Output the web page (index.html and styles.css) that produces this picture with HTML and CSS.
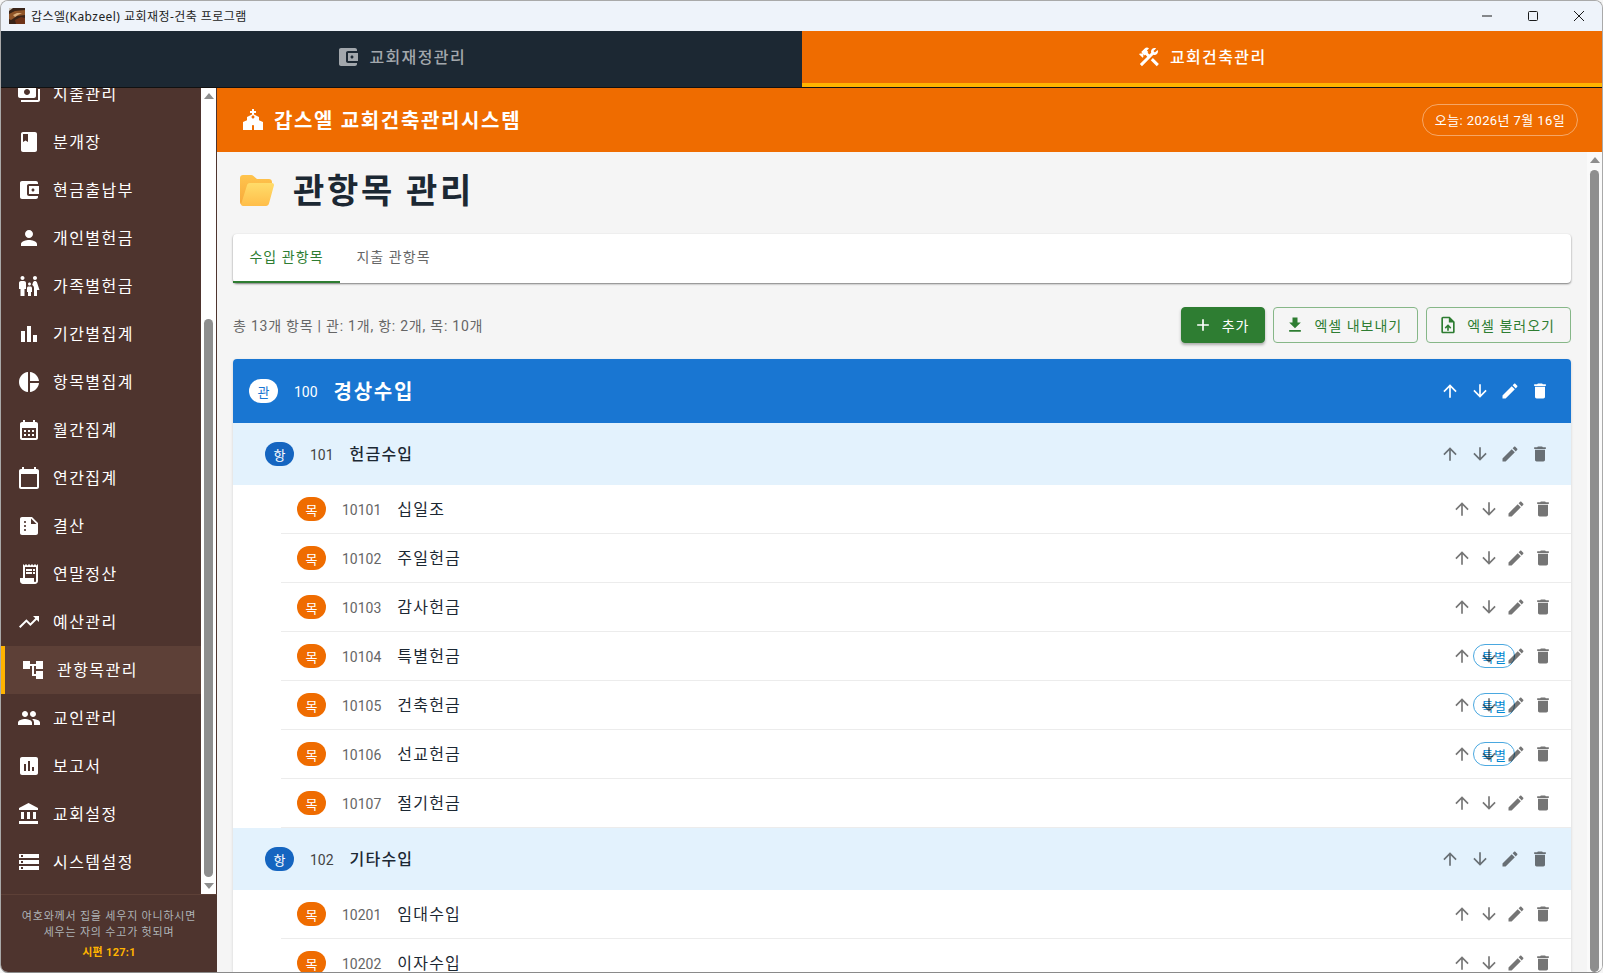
FILE: index.html
```html
<!DOCTYPE html>
<html lang="ko">
<head>
    <meta charset="UTF-8">
    <title>갑스엘(Kabzeel) 교회재정-건축 프로그램</title>
    <link rel="stylesheet" href="styles.css">
</head>
<body>
<svg class="sprites" width="0" height="0">
    <symbol id="i-wallet" viewBox="0 0 24 24"><path d="M21 18v1c0 1.1-.9 2-2 2H5c-1.11 0-2-.9-2-2V5c0-1.1.89-2 2-2h14c1.1 0 2 .9 2 2v1h-9c-1.11 0-2 .9-2 2v8c0 1.1.89 2 2 2h9zm-9-2h10V8H12v8zm4-2.5c-.83 0-1.5-.67-1.5-1.5s.67-1.5 1.5-1.5 1.5.67 1.5 1.5-.67 1.5-1.5 1.5z"/></symbol>
    <symbol id="i-payments" viewBox="0 0 24 24"><path d="M19 14V6c0-1.1-.9-2-2-2H3c-1.1 0-2 .9-2 2v8c0 1.1.9 2 2 2h14c1.1 0 2-.9 2-2zm-9-1c-1.66 0-3-1.34-3-3s1.34-3 3-3 3 1.34 3 3-1.34 3-3 3zm13-6v11c0 1.1-.9 2-2 2H4v-2h17V7h2z"/></symbol>
    <symbol id="i-tools" viewBox="0 0 24 24"><path d="m13.783 15.172 2.121-2.121 5.996 5.996-2.121 2.121zM17.5 10c1.93 0 3.5-1.57 3.5-3.5 0-.58-.16-1.12-.41-1.6l-2.7 2.7-1.49-1.49 2.7-2.7c-.48-.25-1.02-.41-1.6-.41C15.57 3 14 4.57 14 6.5c0 .41.08.8.21 1.16l-1.85 1.85-1.78-1.78.71-.71-1.41-1.41L12 3.49c-1.17-1.17-3.07-1.17-4.24 0L4.22 7.03l1.41 1.41H2.81l-.71.71 3.54 3.54.71-.71V9.15l1.41 1.41.71-.71 1.78 1.78-7.41 7.41 2.12 2.12L16.34 9.79c.36.13.75.21 1.16.21z"/></symbol>
    <symbol id="i-church" viewBox="0 0 24 24"><path d="M18 12.22V9l-5-2.5V5h2V3h-2V1h-2v2H9v2h2v1.5L6 9v3.22L2 14v8h9v-4c0-.55.45-1 1-1s1 .45 1 1v4h9v-8l-4-1.78zm-6-1.72c-.83 0-1.5-.67-1.5-1.5s.67-1.5 1.5-1.5 1.5.67 1.5 1.5-.67 1.5-1.5 1.5z"/></symbol>
    <symbol id="i-book" viewBox="0 0 24 24"><path d="M18 2H6c-1.1 0-2 .9-2 2v16c0 1.1.9 2 2 2h12c1.1 0 2-.9 2-2V4c0-1.1-.9-2-2-2zM6 4h5v8l-2.5-1.5L6 12V4z"/></symbol>
    <symbol id="i-person" viewBox="0 0 24 24"><path d="M12 12c2.21 0 4-1.79 4-4s-1.79-4-4-4-4 1.79-4 4 1.79 4 4 4zm0 2c-2.67 0-8 1.34-8 4v2h16v-2c0-2.66-5.33-4-8-4z"/></symbol>
    <symbol id="i-family" viewBox="0 0 24 24"><path d="M16 4c0-1.11.89-2 2-2s2 .89 2 2-.89 2-2 2-2-.89-2-2zm4 18v-6h2.5l-2.54-7.63C19.68 7.55 18.92 7 18.06 7h-.12c-.86 0-1.63.55-1.9 1.37l-.86 2.58c1.08.6 1.82 1.73 1.82 3.05v8h3zm-7.5-10.5c.83 0 1.5-.67 1.5-1.5s-.67-1.5-1.5-1.5S11 9.17 11 10s.67 1.5 1.5 1.5zM5.5 6c1.11 0 2-.89 2-2s-.89-2-2-2-2 .89-2 2 .89 2 2 2zm2 16v-7H9V9c0-1.1-.9-2-2-2H4c-1.1 0-2 .9-2 2v6h1.5v7h4zm6.5 0v-4h1v-4c0-.82-.68-1.5-1.5-1.5h-2c-.82 0-1.5.68-1.5 1.5v4h1v4h3z"/></symbol>
    <symbol id="i-bars" viewBox="0 0 24 24"><path d="M4 9h4v11H4zm12 4h4v7h-4zm-6-9h4v16h-4z"/></symbol>
    <symbol id="i-pie" viewBox="0 0 24 24"><path d="M11 2v20c-5.07-.5-9-4.79-9-10s3.93-9.5 9-10zm2.03 0v8.99H22c-.47-4.74-4.24-8.52-8.97-8.99zm0 11.01V22c4.74-.47 8.5-4.25 8.97-8.99h-8.97z"/></symbol>
    <symbol id="i-month" viewBox="0 0 24 24"><path d="M19 4h-1V2h-2v2H8V2H6v2H5c-1.11 0-1.99.9-1.99 2L3 20c0 1.1.89 2 2 2h14c1.1 0 2-.9 2-2V6c0-1.1-.9-2-2-2zm0 16H5V10h14v10zM9 14H7v-2h2v2zm4 0h-2v-2h2v2zm4 0h-2v-2h2v2zm-8 4H7v-2h2v2zm4 0h-2v-2h2v2zm4 0h-2v-2h2v2z"/></symbol>
    <symbol id="i-year" viewBox="0 0 24 24"><path d="M20 3h-1V1h-2v2H7V1H5v2H4c-1.1 0-2 .9-2 2v16c0 1.1.9 2 2 2h16c1.1 0 2-.9 2-2V5c0-1.1-.9-2-2-2zm0 18H4V8h16v13z"/></symbol>
    <symbol id="i-summary" viewBox="0 0 24 24"><path d="M15 3H5c-1.1 0-1.99.9-1.99 2L3 19c0 1.1.89 2 1.99 2H19c1.1 0 2-.9 2-2V9l-6-6zM8 17c-.55 0-1-.45-1-1s.45-1 1-1 1 .45 1 1-.45 1-1 1zm0-4c-.55 0-1-.45-1-1s.45-1 1-1 1 .45 1 1-.45 1-1 1zm0-4c-.55 0-1-.45-1-1s.45-1 1-1 1 .45 1 1-.45 1-1 1zm6 1V4.5l5.5 5.5H14z"/></symbol>
    <symbol id="i-receipt" viewBox="0 0 24 24"><path d="M19.5 3.5 18 2l-1.5 1.5L15 2l-1.5 1.5L12 2l-1.5 1.5L9 2 7.5 3.5 6 2v14H3v3c0 1.66 1.34 3 3 3h12c1.66 0 3-1.34 3-3V2l-1.5 1.5zM19 19c0 .55-.45 1-1 1s-1-.45-1-1v-3H8V5h11v14z"/><path d="M9 7h6v2H9zm7 0h2v2h-2zm-7 3h6v2H9zm7 0h2v2h-2z"/></symbol>
    <symbol id="i-trend" viewBox="0 0 24 24"><path d="M16 6l2.29 2.29-4.88 4.88-4-4L2 16.59 3.41 18l6-6 4 4 6.3-6.29L22 12V6z"/></symbol>
    <symbol id="i-tree" viewBox="0 0 24 24"><path d="M22 11V3h-7v3H9V3H2v8h7V8h2v10h4v3h7v-8h-7v3h-2V8h2v3z"/></symbol>
    <symbol id="i-people" viewBox="0 0 24 24"><path d="M16 11c1.66 0 2.99-1.34 2.99-3S17.66 5 16 5c-1.66 0-3 1.34-3 3s1.34 3 3 3zm-8 0c1.66 0 2.99-1.34 2.99-3S9.66 5 8 5C6.34 5 5 6.34 5 8s1.34 3 3 3zm0 2c-2.33 0-7 1.17-7 3.5V19h14v-2.5c0-2.33-4.67-3.5-7-3.5zm8 0c-.29 0-.62.02-.97.05 1.16.84 1.97 1.97 1.97 3.45V19h6v-2.5c0-2.33-4.67-3.5-7-3.5z"/></symbol>
    <symbol id="i-report" viewBox="0 0 24 24"><path d="M19 3H5c-1.1 0-2 .9-2 2v14c0 1.1.9 2 2 2h14c1.1 0 2-.9 2-2V5c0-1.1-.9-2-2-2zM9 17H7v-7h2v7zm4 0h-2V7h2v10zm4 0h-2v-4h2v4z"/></symbol>
    <symbol id="i-bank" viewBox="0 0 24 24"><path d="M4 10v7h3v-7H4zm6 0v7h3v-7h-3zM2 22h19v-3H2v3zm14-12v7h3v-7h-3zm-4.5-9L2 6v2h19V6l-9.5-5z"/></symbol>
    <symbol id="i-storage" viewBox="0 0 24 24"><path d="M2 20h20v-4H2v4zm2-3h2v2H4v-2zM2 4v4h20V4H2zm4 3H4V5h2v2zm-4 7h20v-4H2v4zm2-3h2v2H4v-2z"/></symbol>
    <symbol id="i-up" viewBox="0 0 24 24"><path d="M4 12l1.41 1.41L11 7.83V20h2V7.83l5.58 5.59L20 12l-8-8-8 8z"/></symbol>
    <symbol id="i-down" viewBox="0 0 24 24"><path d="M20 12l-1.41-1.41L13 16.17V4h-2v12.17l-5.58-5.59L4 12l8 8 8-8z"/></symbol>
    <symbol id="i-edit" viewBox="0 0 24 24"><path d="M3 17.25V21h3.75L17.81 9.94l-3.75-3.75L3 17.25zM20.71 7.04c.39-.39.39-1.02 0-1.41l-2.34-2.34c-.39-.39-1.02-.39-1.41 0l-1.83 1.83 3.75 3.75 1.83-1.83z"/></symbol>
    <symbol id="i-trash" viewBox="0 0 24 24"><path d="M6 19c0 1.1.9 2 2 2h8c1.1 0 2-.9 2-2V7H6v12zM19 4h-3.5l-1-1h-5l-1 1H5v2h14V4z"/></symbol>
    <symbol id="i-add" viewBox="0 0 24 24"><path d="M19 13h-6v6h-2v-6H5v-2h6V5h2v6h6v2z"/></symbol>
    <symbol id="i-export" viewBox="0 0 24 24"><path d="M5 20h14v-2H5v2zM19 9h-4V3H9v6H5l7 7 7-7z"/></symbol>
    <symbol id="i-import" viewBox="0 0 24 24"><path d="M14 2H6c-1.1 0-1.99.9-1.99 2L4 20c0 1.1.89 2 1.99 2H18c1.1 0 2-.9 2-2V8l-6-6zm4 18H6V4h7v5h5v11zM8 15.01l1.41 1.41L11 14.84V19h2v-4.16l1.59 1.59L16 15.01 12.01 11 8 15.01z"/></symbol>
</svg>

<div class="window">
    <div class="titlebar">
        <svg class="app-icon" viewBox="0 0 16 16">
            <rect width="16" height="16" fill="#3a2418"/>
            <path d="M0 6 6 3l10-1v5L8 8 2 12 0 11z" fill="#8f5428"/>
            <path d="M4 7l4-2 5 0-4 2-3 2z" fill="#d9ae7c"/>
            <path d="M6 12l6-3 4 1v6H7z" fill="#6e3318"/>
            <path d="M0 0h4L0 3z" fill="#cfc6b8"/>
        </svg>
        <span class="app-title">갑스엘(Kabzeel) 교회재정-건축 프로그램</span>
        <div class="win-controls">
            <svg viewBox="0 0 10 10"><path d="M0 5h10" stroke="#1a1a1a" fill="none"/></svg>
            <svg viewBox="0 0 10 10"><rect x=".5" y=".5" width="9" height="9" rx="1" stroke="#1a1a1a" fill="none"/></svg>
            <svg viewBox="0 0 10 10"><path d="M0 0l10 10M10 0 0 10" stroke="#1a1a1a" fill="none"/></svg>
        </div>
    </div>

    <div class="module-tabs">
        <div class="module-tab">
            <svg class="icon"><use href="#i-wallet"/></svg><span>교회재정관리</span>
        </div>
        <div class="module-tab active">
            <svg class="icon"><use href="#i-tools"/></svg><span>교회건축관리</span>
        </div>
    </div>

    <div class="app-body">
        <aside class="sidebar">
            <div class="sidebar-scroll">
                <nav class="nav-list">
                    <a class="nav-item"><svg class="icon"><use href="#i-payments"/></svg><span>지출관리</span></a>
                    <a class="nav-item"><svg class="icon"><use href="#i-book"/></svg><span>분개장</span></a>
                    <a class="nav-item"><svg class="icon"><use href="#i-wallet"/></svg><span>현금출납부</span></a>
                    <a class="nav-item"><svg class="icon"><use href="#i-person"/></svg><span>개인별헌금</span></a>
                    <a class="nav-item"><svg class="icon"><use href="#i-family"/></svg><span>가족별헌금</span></a>
                    <a class="nav-item"><svg class="icon"><use href="#i-bars"/></svg><span>기간별집계</span></a>
                    <a class="nav-item"><svg class="icon"><use href="#i-pie"/></svg><span>항목별집계</span></a>
                    <a class="nav-item"><svg class="icon"><use href="#i-month"/></svg><span>월간집계</span></a>
                    <a class="nav-item"><svg class="icon"><use href="#i-year"/></svg><span>연간집계</span></a>
                    <a class="nav-item"><svg class="icon"><use href="#i-summary"/></svg><span>결산</span></a>
                    <a class="nav-item"><svg class="icon"><use href="#i-receipt"/></svg><span>연말정산</span></a>
                    <a class="nav-item"><svg class="icon"><use href="#i-trend"/></svg><span>예산관리</span></a>
                    <a class="nav-item active"><svg class="icon"><use href="#i-tree"/></svg><span>관항목관리</span></a>
                    <a class="nav-item"><svg class="icon"><use href="#i-people"/></svg><span>교인관리</span></a>
                    <a class="nav-item"><svg class="icon"><use href="#i-report"/></svg><span>보고서</span></a>
                    <a class="nav-item"><svg class="icon"><use href="#i-bank"/></svg><span>교회설정</span></a>
                    <a class="nav-item"><svg class="icon"><use href="#i-storage"/></svg><span>시스템설정</span></a>
                </nav>
                <div class="scrollbar scrollbar-nav">
                    <span class="arrow-up"></span>
                    <span class="thumb"></span>
                    <span class="arrow-down"></span>
                </div>
            </div>
            <div class="sidebar-foot">
                <p>여호와께서 집을 세우지 아니하시면<br>세우는 자의 수고가 헛되며</p>
                <p class="verse">시편 127:1</p>
            </div>
        </aside>

        <main class="main">
            <header class="main-head">
                <svg class="icon"><use href="#i-church"/></svg>
                <h2>갑스엘 교회건축관리시스템</h2>
                <span class="today">오늘: 2026년 7월 16일</span>
            </header>

            <div class="main-scroll">
                <div class="page">
                    <h1 class="page-title">
                        <svg class="folder" viewBox="0 0 34 31">
                            <defs>
                                <linearGradient id="folderBack" x1="0" y1="0" x2="0" y2="1">
                                    <stop offset="0" stop-color="#ffc44d"/>
                                    <stop offset="1" stop-color="#f7a93a"/>
                                </linearGradient>
                                <linearGradient id="folderFront" x1="0" y1="0" x2="0" y2="1">
                                    <stop offset="0" stop-color="#ffdc6a"/>
                                    <stop offset="1" stop-color="#ffbe4a"/>
                                </linearGradient>
                            </defs>
                            <path d="M3 0h8c1 0 1.8.4 2.5 1.1L17 4h12c1.7 0 3 1.3 3 3v4H9L3 30c-1.7 0-3-1.3-3-3V3c0-1.7 1.3-3 3-3z" fill="url(#folderBack)"/>
                            <path d="M10 8h22c1.4 0 2.3 1.2 1.9 2.6L29 28.5c-.4 1.5-1.5 2.5-3 2.5H3c-1.4 0-2.1-1-1.7-2.4L7 10.3C7.4 8.9 8.5 8 10 8z" fill="url(#folderFront)"/>
                        </svg>
                        <span class="page-name">관항목 관리</span>
                    </h1>

                    <div class="tabs">
                        <span class="tab selected">수입 관항목</span>
                        <span class="tab">지출 관항목</span>
                    </div>

                    <div class="toolbar">
                        <span class="summary">총 13개 항목 | 관: 1개, 항: 2개, 목: 10개</span>
                        <button class="btn btn-solid"><svg class="icon"><use href="#i-add"/></svg>추가</button>
                        <button class="btn"><svg class="icon"><use href="#i-export"/></svg>엑셀 내보내기</button>
                        <button class="btn"><svg class="icon"><use href="#i-import"/></svg>엑셀 불러오기</button>
                    </div>

                    <div class="tree">
                        <div class="row row-gwan">
                            <span class="badge">관</span><span class="code">100</span><span class="name">경상수입</span>
                            <div class="actions">
                                <svg class="icon"><use href="#i-up"/></svg><svg class="icon"><use href="#i-down"/></svg><svg class="icon"><use href="#i-edit"/></svg><svg class="icon"><use href="#i-trash"/></svg>
                            </div>
                        </div>

                        <div class="row row-hang">
                            <span class="badge">항</span><span class="code">101</span><span class="name">헌금수입</span>
                            <div class="actions">
                                <svg class="icon"><use href="#i-up"/></svg><svg class="icon"><use href="#i-down"/></svg><svg class="icon"><use href="#i-edit"/></svg><svg class="icon"><use href="#i-trash"/></svg>
                            </div>
                        </div>
                        <div class="row row-mok">
                            <span class="badge">목</span><span class="code">10101</span><span class="name">십일조</span>
                            <div class="actions">
                                <svg class="icon"><use href="#i-up"/></svg><svg class="icon"><use href="#i-down"/></svg><svg class="icon"><use href="#i-edit"/></svg><svg class="icon"><use href="#i-trash"/></svg>
                            </div>
                        </div>
                        <div class="row row-mok">
                            <span class="badge">목</span><span class="code">10102</span><span class="name">주일헌금</span>
                            <div class="actions">
                                <svg class="icon"><use href="#i-up"/></svg><svg class="icon"><use href="#i-down"/></svg><svg class="icon"><use href="#i-edit"/></svg><svg class="icon"><use href="#i-trash"/></svg>
                            </div>
                        </div>
                        <div class="row row-mok">
                            <span class="badge">목</span><span class="code">10103</span><span class="name">감사헌금</span>
                            <div class="actions">
                                <svg class="icon"><use href="#i-up"/></svg><svg class="icon"><use href="#i-down"/></svg><svg class="icon"><use href="#i-edit"/></svg><svg class="icon"><use href="#i-trash"/></svg>
                            </div>
                        </div>
                        <div class="row row-mok">
                            <span class="badge">목</span><span class="code">10104</span><span class="name">특별헌금</span><span class="tag">특별</span>
                            <div class="actions">
                                <svg class="icon"><use href="#i-up"/></svg><svg class="icon"><use href="#i-down"/></svg><svg class="icon"><use href="#i-edit"/></svg><svg class="icon"><use href="#i-trash"/></svg>
                            </div>
                        </div>
                        <div class="row row-mok">
                            <span class="badge">목</span><span class="code">10105</span><span class="name">건축헌금</span><span class="tag">특별</span>
                            <div class="actions">
                                <svg class="icon"><use href="#i-up"/></svg><svg class="icon"><use href="#i-down"/></svg><svg class="icon"><use href="#i-edit"/></svg><svg class="icon"><use href="#i-trash"/></svg>
                            </div>
                        </div>
                        <div class="row row-mok">
                            <span class="badge">목</span><span class="code">10106</span><span class="name">선교헌금</span><span class="tag">특별</span>
                            <div class="actions">
                                <svg class="icon"><use href="#i-up"/></svg><svg class="icon"><use href="#i-down"/></svg><svg class="icon"><use href="#i-edit"/></svg><svg class="icon"><use href="#i-trash"/></svg>
                            </div>
                        </div>
                        <div class="row row-mok">
                            <span class="badge">목</span><span class="code">10107</span><span class="name">절기헌금</span>
                            <div class="actions">
                                <svg class="icon"><use href="#i-up"/></svg><svg class="icon"><use href="#i-down"/></svg><svg class="icon"><use href="#i-edit"/></svg><svg class="icon"><use href="#i-trash"/></svg>
                            </div>
                        </div>

                        <div class="row row-hang">
                            <span class="badge">항</span><span class="code">102</span><span class="name">기타수입</span>
                            <div class="actions">
                                <svg class="icon"><use href="#i-up"/></svg><svg class="icon"><use href="#i-down"/></svg><svg class="icon"><use href="#i-edit"/></svg><svg class="icon"><use href="#i-trash"/></svg>
                            </div>
                        </div>
                        <div class="row row-mok">
                            <span class="badge">목</span><span class="code">10201</span><span class="name">임대수입</span>
                            <div class="actions">
                                <svg class="icon"><use href="#i-up"/></svg><svg class="icon"><use href="#i-down"/></svg><svg class="icon"><use href="#i-edit"/></svg><svg class="icon"><use href="#i-trash"/></svg>
                            </div>
                        </div>
                        <div class="row row-mok">
                            <span class="badge">목</span><span class="code">10202</span><span class="name">이자수입</span>
                            <div class="actions">
                                <svg class="icon"><use href="#i-up"/></svg><svg class="icon"><use href="#i-down"/></svg><svg class="icon"><use href="#i-edit"/></svg><svg class="icon"><use href="#i-trash"/></svg>
                            </div>
                        </div>
                    </div>
                </div>
                <div class="scrollbar scrollbar-main">
                    <span class="arrow-up"></span>
                    <span class="thumb"></span>
                </div>
            </div>
        </main>
    </div>
</div>
</body>
</html>
```

FILE: styles.css
```css
html, body {
    margin: 0;
    height: 100%;
    overflow: hidden;
    background: #f5f5f5;
}
body {
    font-family: Roboto, "Noto Sans CJK KR", sans-serif;
    color: #1c2833;
}
.sprites {
    display: none;
}
.icon {
    width: 24px;
    height: 24px;
    fill: currentColor;
    flex: none;
}
.window {
    height: 973px;
    box-sizing: border-box;
    display: flex;
    flex-direction: column;
    border: 1px solid #a9a9a9;
    border-bottom-color: #8a8a8a;
    border-radius: 8px;
    overflow: hidden;
}

/* title bar */
.titlebar {
    height: 30px;
    flex: none;
    display: flex;
    align-items: center;
    background: #eef3fa;
    padding-left: 8px;
    font-family: "Noto Sans", "Noto Sans CJK KR", sans-serif;
    font-size: 12px;
}
.app-icon {
    width: 16px;
    height: 16px;
    margin-right: 6px;
}
.app-title {
    color: #222;
    letter-spacing: 0.45px;
}
.win-controls {
    margin-left: auto;
    display: flex;
    align-items: center;
    gap: 36px;
    padding-right: 18px;
}
.win-controls svg {
    width: 10px;
    height: 10px;
}

/* module switch */
.module-tabs {
    height: 56px;
    flex: none;
    display: flex;
    background: #1c2833;
    border-bottom: 1px solid #111;
}
.module-tab {
    flex: 1;
    display: flex;
    align-items: center;
    justify-content: center;
    gap: 9px;
    font-size: 16px;
    font-weight: 500;
    letter-spacing: 1.4px;
    color: #a2a7ac;
    border-bottom: 4px solid transparent;
}
.module-tab span {
    padding-bottom: 2px;
}
.module-tab.active {
    background: #ef6c00;
    color: #fff;
    border-bottom-color: #ffb300;
}

.app-body {
    flex: 1;
    min-height: 0;
    display: flex;
}

/* sidebar */
.sidebar {
    width: 216px;
    flex: none;
    display: flex;
    flex-direction: column;
    background: #4e342e;
}
.sidebar-scroll {
    height: 806px;
    flex: none;
    display: flex;
    overflow: hidden;
}
.nav-list {
    flex: 1;
    margin-top: -18px;
}
.nav-item {
    height: 48px;
    display: flex;
    align-items: center;
    gap: 12px;
    padding-left: 16px;
    color: #fff;
    font-size: 16px;
    letter-spacing: 1.45px;
}
.nav-item span {
    padding-bottom: 3px;
}
.nav-item.active {
    background: #5d4037;
    border-left: 4px solid #ffb300;
}
.scrollbar {
    position: relative;
    width: 15px;
    flex: none;
    background: #fff;
    display: flex;
    flex-direction: column;
    align-items: center;
}
.scrollbar-nav {
    margin-right: 1px;
}
.thumb {
    width: 9px;
    background: #8e8e8e;
    border-radius: 5px;
}
.arrow-up, .arrow-down {
    position: absolute;
    width: 0;
    height: 0;
    border-left: 5px solid transparent;
    border-right: 5px solid transparent;
}
.arrow-up {
    top: 5px;
    border-bottom: 6px solid #8e8e8e;
}
.arrow-down {
    bottom: 5px;
    border-top: 6px solid #8e8e8e;
}
.scrollbar-nav .thumb {
    margin-top: 231px;
    height: 558px;
}
.sidebar-foot {
    flex: 1;
    border-top: 1px solid #5d4037;
    text-align: center;
    font-size: 11px;
    line-height: 16px;
    letter-spacing: 0.8px;
    color: #aeb5b8;
    padding-top: 14px;
}
.sidebar-foot p {
    margin: 0;
}
.sidebar-foot .verse {
    margin-top: 4px;
    letter-spacing: 0.3px;
    color: #ffb300;
    font-weight: 700;
}

/* main */
.main {
    flex: 1;
    min-width: 0;
    display: flex;
    flex-direction: column;
}
.main-head {
    height: 64px;
    flex: none;
    display: flex;
    align-items: center;
    padding: 0 24px;
    background: #ef6c00;
    color: #fff;
}
.main-head h2 {
    margin: 0 0 0 9px;
    padding-bottom: 2px;
    font-size: 20px;
    font-weight: 700;
    letter-spacing: 1.65px;
}
.today {
    margin-left: auto;
    height: 32px;
    box-sizing: border-box;
    padding: 0 12px 2px;
    display: flex;
    align-items: center;
    border: 1px solid rgba(255,255,255,0.4);
    border-radius: 16px;
    font-size: 13px;
    letter-spacing: 0.4px;
}
.main-scroll {
    flex: 1;
    min-height: 0;
    display: flex;
    background: #f5f5f5;
    overflow: hidden;
}
.page {
    flex: 1;
    min-width: 0;
    padding: 16px 16px 0;
}
.scrollbar-main {
    background: #fafafa;
}
.scrollbar-main .thumb {
    margin-top: 18px;
    flex: 1;
}
.page-title {
    margin: 0 0 24px;
    height: 42px;
    display: flex;
    align-items: center;
    gap: 19px;
    font-size: 34px;
    font-weight: 700;
    letter-spacing: 2.7px;
    color: #1c2833;
}
.page-name {
    padding-bottom: 2px;
}
.folder {
    width: 34px;
    height: 31px;
    margin: 2px 0 0 7px;
}

/* tabs */
.tabs {
    height: 49px;
    display: flex;
    background: #fff;
    border-radius: 4px;
    box-shadow: 0 1px 2px rgba(0,0,0,0.5);
}
.tab {
    width: 107px;
    box-sizing: border-box;
    padding-bottom: 6px;
    display: flex;
    align-items: center;
    justify-content: center;
    font-size: 14px;
    letter-spacing: 1.05px;
    color: #666;
}
.tab.selected {
    padding-bottom: 4px;
    color: #2e7d32;
    border-bottom: 2px solid #2e7d32;
}

/* toolbar */
.toolbar {
    height: 36px;
    margin: 24px 0 16px;
    display: flex;
    align-items: center;
    gap: 8px;
}
.summary {
    margin-right: auto;
    font-size: 14px;
    letter-spacing: 0.77px;
    color: #666;
}
.btn {
    height: 36px;
    padding: 0 15px 0 11px;
    display: flex;
    align-items: center;
    gap: 9px;
    background: transparent;
    border: 1px solid #86b788;
    border-radius: 4px;
    font-family: inherit;
    font-size: 14px;
    letter-spacing: 1px;
    color: #2e7d32;
}
.btn .icon {
    width: 20px;
    height: 20px;
}
.btn-solid {
    background: #2e7d32;
    border-color: #2e7d32;
    color: #fff;
    box-shadow: 0 2px 3px rgba(0,0,0,0.3);
}

/* tree */
.tree {
    background: #fff;
    border-radius: 4px 4px 0 0;
    box-shadow: 0 1px 3px rgba(0,0,0,0.15);
}
.row {
    position: relative;
    display: flex;
    align-items: center;
}
.badge {
    width: 29px;
    height: 24px;
    flex: none;
    display: flex;
    align-items: center;
    justify-content: center;
    border-radius: 12px;
    font-size: 13px;
}
.code {
    padding-top: 1px;
}
.name {
    padding-bottom: 2px;
}
.row-gwan {
    height: 64px;
    padding-left: 16px;
    background: #1976d2;
    color: #fff;
    border-radius: 4px 4px 0 0;
}
.row-gwan .badge {
    background: #fff;
    color: #1976d2;
}
.row-gwan .code {
    margin: 0 16px;
    font-size: 14px;
}
.row-gwan .name {
    font-size: 20px;
    font-weight: 700;
    letter-spacing: 1.7px;
}
.row-hang {
    height: 62px;
    padding-left: 32px;
    background: #e3f2fd;
}
.row-hang .badge {
    background: #1565c0;
    color: #fff;
}
.row-hang .code {
    margin: 0 16px;
    font-size: 14px;
    color: #444;
}
.row-hang .name {
    font-size: 16px;
    font-weight: 500;
    letter-spacing: 1.2px;
}
.row-mok {
    height: 49px;
    box-sizing: border-box;
    margin-left: 48px;
    padding-left: 16px;
    border-bottom: 1px solid #ececec;
}
.row-mok .badge {
    background: #ef6c00;
    color: #fff;
}
.row-mok .code {
    margin: 0 16px;
    font-size: 14px;
    color: #666;
}
.row-mok .name {
    font-size: 16px;
    letter-spacing: 1.2px;
}
.tag {
    margin-left: auto;
    margin-right: 56px;
    width: 42px;
    height: 24px;
    box-sizing: border-box;
    display: flex;
    align-items: center;
    justify-content: center;
    border: 1px solid #4aa8e0;
    border-radius: 12px;
    font-size: 13px;
    letter-spacing: 0.5px;
    color: #0288d1;
}
.actions {
    position: absolute;
    top: 50%;
    right: 21px;
    transform: translateY(-50%);
    display: flex;
    gap: 10px;
    color: rgba(0,0,0,0.54);
}
.actions .icon {
    width: 20px;
    height: 20px;
}
.row-mok .actions {
    right: 18px;
    gap: 7px;
}
.row-gwan .actions {
    color: #fff;
}
```
